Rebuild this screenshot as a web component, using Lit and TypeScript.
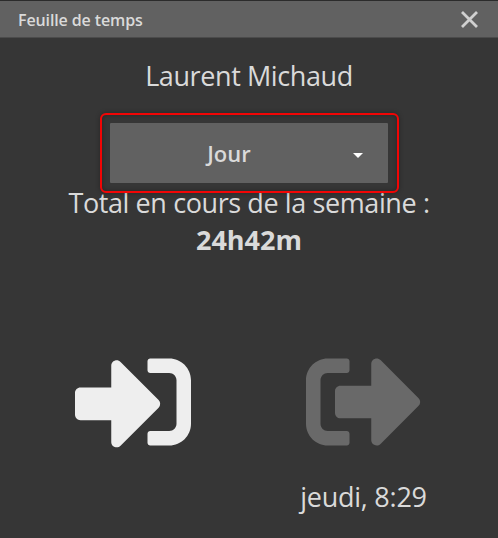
import { html, css, svg, LitElement } from 'lit';
import { customElement, property } from 'lit/decorators.js';

const signIn = svg`<path d="M416 448h-84c-6.600 0-12-5.400-12-12v-40c0-6.600 5.400-12 12-12h84c17.700 0 32-14.300 32-32V160c0-17.700-14.300-32-32-32h-84c-6.600 0-12-5.400-12-12V76c0-6.600 5.400-12 12-12h84c53 0 96 43 96 96v192c0 53-43 96-96 96zm-47-201L201 79c-15-15-41-4.500-41 17v96H24c-13.300 0-24 10.700-24 24v96c0 13.300 10.700 24 24 24h136v96c0 21.500 26 32 41 17l168-168c9.300-9.400 9.300-24.600 0-34z"/>`;
const signOut = svg`<path d="M497 273L329 441c-15 15-41 4.500-41-17v-96H152c-13.300 0-24-10.700-24-24v-96c0-13.300 10.700-24 24-24h136V88c0-21.400 25.900-32 41-17l168 168c9.300 9.400 9.300 24.600 0 34zM192 436v-40c0-6.600-5.400-12-12-12H96c-17.700 0-32-14.300-32-32V160c0-17.700 14.300-32 32-32h84c6.600 0 12-5.400 12-12V76c0-6.600-5.400-12-12-12H96c-53 0-96 43-96 96v192c0 53 43 96 96 96h84c6.600 0 12-5.400 12-12z"/>`;

@customElement('app-root')
export class AppRoot extends LitElement {
  static styles = css`
    :host {
      display: flex;
      flex-direction: column;
      box-sizing: border-box;
      height: 538px;
      overflow: hidden;
      background: #363636;
      border-top: 1px solid #2b2b2b;
      color: #dadada;
      font-family: "Segoe UI", "Open Sans", "Noto Sans", sans-serif;
      font-size: 27px;
      line-height: 37px;
    }
    header {
      display: flex;
      align-items: center;
      justify-content: space-between;
      box-sizing: border-box;
      height: 37px;
      padding: 0 18px;
      background: #616161;
      border-bottom: 1px solid #4b4b4b;
    }
    h1 {
      margin: 3px 0 0;
      font-size: 16px;
      font-weight: 600;
      letter-spacing: -0.12px;
    }
    button {
      padding: 0;
      border: 0;
      background: none;
      color: inherit;
      font: inherit;
    }
    svg {
      display: block;
      fill: currentColor;
    }
    .close svg {
      width: 21px;
      height: 21px;
      stroke: #d0d0d0;
      stroke-width: 2.8;
    }
    main {
      display: flex;
      flex-direction: column;
      align-items: center;
      padding-top: 19px;
    }
    .name,
    .label {
      letter-spacing: -0.4px;
    }
    .period {
      position: relative;
      margin: 29px 0 1px;
    }
    .select {
      display: grid;
      grid-template-columns: 238px 20px 1fr;
      align-items: center;
      width: 278px;
      height: 60px;
      border-radius: 1px;
      background: #616161;
      font-size: 22px;
      font-weight: 600;
    }
    .caret {
      width: 10px;
      height: 5px;
      margin-top: 5px;
      margin-left: 5px;
      color: #fff;
    }
    .highlight {
      position: absolute;
      inset: -10.5px -10.5px -9.5px;
      border: 2px solid #f20505;
      border-radius: 6px;
      box-shadow: 0 0 5px rgba(0, 0, 0, 0.3), inset 0 0 5px rgba(0, 0, 0, 0.3);
      pointer-events: none;
    }
    .clock {
      display: grid;
      grid-template-columns: 116px 116px;
      column-gap: 115px;
      margin: 86px 2px 0 0;
    }
    .clock svg {
      width: 116px;
      height: 116px;
    }
    .in {
      color: #eee;
    }
    .out {
      color: #696969;
    }
    .time {
      grid-column: 2;
      justify-self: center;
      margin-top: 18px;
      letter-spacing: -0.25px;
      white-space: nowrap;
    }
  `;

  @property() name = 'Laurent Michaud';
  @property() period = 'Jour';
  @property() total = '24h42m';
  @property() time = 'jeudi, 8:29';

  render() {
    return html`
      <header>
        <h1>Feuille de temps</h1>
        <button class="close" aria-label="Fermer">
          <svg viewBox="0 0 21 21"><path d="M3 3L18 18M18 3L3 18"/></svg>
        </button>
      </header>
      <main>
        <div class="name">${this.name}</div>
        <div class="period">
          <button class="select">
            <span>${this.period}</span>
            <svg class="caret" viewBox="0 0 10 5"><path d="M0 0h10L5 5z"/></svg>
          </button>
          <div class="highlight"></div>
        </div>
        <div class="label">Total en cours de la semaine :</div>
        <strong>${this.total}</strong>
        <div class="clock">
          <button class="in" aria-label="Entrée"><svg viewBox="0 0 512 512">${signIn}</svg></button>
          <button class="out" aria-label="Sortie"><svg viewBox="0 0 512 512">${signOut}</svg></button>
          <div class="time">${this.time}</div>
        </div>
      </main>
    `;
  }
}
